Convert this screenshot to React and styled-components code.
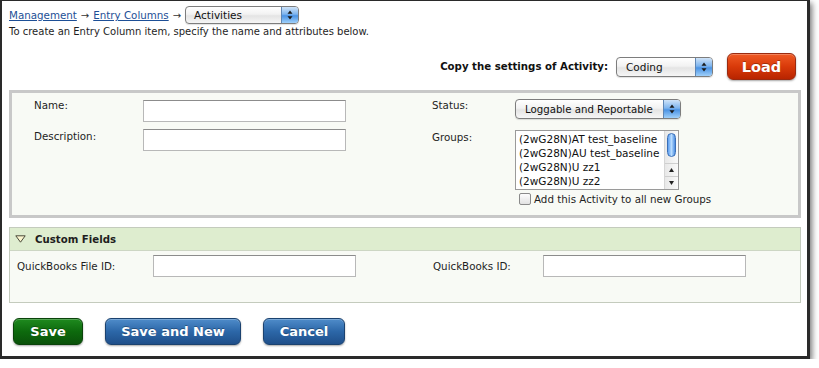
import React from "react";
import styled, { createGlobalStyle } from "styled-components";

const Global = createGlobalStyle`
  html, body { margin: 0; padding: 0; background: #fff; }
  body { font-family: "DejaVu Sans", Verdana, sans-serif; color: #1e1e1e; }
`;

const Window = styled.div`
  box-sizing: border-box;
  width: 810px;
  height: 359px;
  background: #fff;
  border-style: solid;
  border-color: #2a2a2a;
  border-width: 1px 3px 3px 2px;
  box-shadow: 2px 3px 6px rgba(0, 0, 0, 0.55);
  padding: 4px 3px 0 7px;
  display: flex;
  flex-direction: column;
`;

const Crumbs = styled.div`
  display: flex;
  align-items: center;
  gap: 4px;
  height: 20px;
  font-size: 10.3px;
`;

const CrumbLink = styled.a`
  color: #1d4f96;
  text-decoration: underline;
  cursor: pointer;
`;

const Arrow = styled.span`
  color: #333;
  font-size: 10px;
`;

const Intro = styled.div`
  font-size: 10px;
  line-height: 12px;
  margin-top: 1px;
  color: #1e1e1e;
`;

const CopyRow = styled.div`
  display: flex;
  align-items: center;
  justify-content: flex-end;
  margin-top: 15px;
  padding-right: 8px;
  height: 27px;
  gap: 8px;
`;

const CopyLabel = styled.span`
  font-weight: bold;
  font-size: 10.2px;
  color: #111;
`;

const SelectBox = styled.div`
  box-sizing: border-box;
  display: inline-flex;
  align-items: stretch;
  width: ${(p) => p.$w}px;
  height: ${(p) => p.$h}px;
  border: 1px solid #7d7d7d;
  border-radius: 4px;
  background: linear-gradient(#ffffff, #f2f2f2 45%, #e4e4e4 55%, #f6f6f6);
  font-size: ${(p) => p.$fs || 10.5}px;
  color: #111;
  overflow: hidden;
  box-shadow: 0 1px 1px rgba(0, 0, 0, 0.12);
`;

const SelectText = styled.span`
  flex: 1;
  display: flex;
  align-items: center;
  padding-left: ${(p) => p.$pl || 9}px;
  white-space: nowrap;
`;

const SelectCap = styled.span`
  width: 16px;
  display: flex;
  align-items: center;
  justify-content: center;
  border-left: 1px solid #5f86b4;
  background: linear-gradient(#cfe3f8, #7db4ee 45%, #4b93e4 55%, #9fd0fa);
`;

const Arrows = () => (
  <svg width="6" height="10" viewBox="0 0 6 10">
    <path d="M3 0.5 L5.5 3.8 L0.5 3.8 Z" fill="#1a1a1a" />
    <path d="M3 9.5 L5.5 6.2 L0.5 6.2 Z" fill="#1a1a1a" />
  </svg>
);

const Select = ({ w, h, fs, pl, children }) => (
  <SelectBox $w={w} $h={h} $fs={fs}>
    <SelectText $pl={pl}>{children}</SelectText>
    <SelectCap>
      <Arrows />
    </SelectCap>
  </SelectBox>
);

const Button = styled.button`
  box-sizing: border-box;
  width: ${(p) => p.$w}px;
  height: 27px;
  border-radius: 6px;
  font-family: "DejaVu Sans", Verdana, sans-serif;
  font-weight: bold;
  font-size: ${(p) => p.$fs || 13}px;
  color: #fff;
  cursor: pointer;
  padding: 0;
  border: 1px solid ${(p) => p.$edge};
  background: linear-gradient(${(p) => p.$top}, ${(p) => p.$mid} 50%, ${(p) => p.$bot});
  box-shadow: 0 1px 2px rgba(0, 0, 0, 0.35), inset 0 1px 0 rgba(255, 255, 255, 0.25);
  text-shadow: 0 -1px 0 rgba(0, 0, 0, 0.3);
`;

const LoadButton = styled(Button)`
  margin-left: 6px;
`;

const Panel = styled.div`
  margin-top: 10px;
  margin-right: 3px;
  border: 3px solid #c8c8c8;
  background: #f8faf5;
  padding: 6px 0 10px 22px;
  display: grid;
  grid-template-columns: 109px 289px 83px 1fr;
  grid-template-rows: auto auto auto;
  row-gap: 7px;
  align-items: start;
`;

const Label = styled.label`
  font-size: 10.3px;
  line-height: 13px;
  color: #1e1e1e;
  padding-top: ${(p) => p.$pt || 0}px;
`;

const TextInput = styled.input`
  box-sizing: border-box;
  width: 203px;
  height: 22px;
  margin: ${(p) => p.$mt || 0}px 0 0 0;
  border: 1px solid #b8b8b8;
  border-top-color: #8c8c8c;
  background: #fff;
  padding: 2px 4px;
  font-size: 11px;
  outline: none;
`;

const ListBox = styled.div`
  box-sizing: border-box;
  width: 164px;
  height: 60px;
  border: 1px solid #9a9a9a;
  background: #fff;
  display: flex;
  margin-top: 1px;
`;

const ListItems = styled.div`
  flex: 1;
  padding: 1px 0 0 3px;
  font-size: 10.5px;
  line-height: 14px;
  color: #111;
  white-space: nowrap;
  overflow: hidden;
`;

const ScrollBar = styled.div`
  width: 13px;
  display: flex;
  flex-direction: column;
  align-items: center;
  background: linear-gradient(90deg, #e8e8e8, #fafafa);
  border-left: 1px solid #d6d6d6;
`;

const Thumb = styled.div`
  width: 9px;
  height: 24px;
  margin-top: 2px;
  border-radius: 5px;
  border: 1px solid #3a6fb8;
  box-sizing: border-box;
  background: linear-gradient(90deg, #5d9ef0, #b8dcff 50%, #4d8de0);
`;

const ScrollArrow = styled.div`
  height: 13px;
  width: 13px;
  display: flex;
  align-items: center;
  justify-content: center;
  border-top: 1px solid #cfcfcf;
  box-sizing: border-box;
  margin-top: ${(p) => (p.$first ? "auto" : "0")};
`;

const CheckRow = styled.div`
  grid-column: 4;
  display: flex;
  align-items: center;
  gap: 3px;
  margin-top: -4px;
  padding-left: 4px;
  font-size: 10.3px;
  color: #1e1e1e;
`;

const CheckBox = styled.span`
  box-sizing: border-box;
  width: 12px;
  height: 12px;
  border: 1px solid #8a8a8a;
  border-radius: 2px;
  background: linear-gradient(#fdfdfd, #e2e2e2);
`;

const Custom = styled.div`
  margin-top: 9px;
  margin-right: 3px;
  border: 1px solid #c4cbbd;
  display: flex;
  flex-direction: column;
`;

const CustomHead = styled.div`
  height: 22px;
  background: #deedcf;
  border-bottom: 1px solid #cdd6c4;
  display: flex;
  align-items: center;
  padding-left: 5px;
  gap: 9px;
  font-weight: bold;
  font-size: 10.2px;
  color: #1e1e1e;
`;

const CustomBody = styled.div`
  height: 51px;
  background: #f8faf5;
  display: grid;
  grid-template-columns: 136px 280px 110px 1fr;
  align-items: start;
  padding: 4px 0 0 7px;
  box-sizing: border-box;
`;

const CenterLabel = styled(Label)`
  line-height: 22px;
`;

const ButtonRow = styled.div`
  display: flex;
  gap: 22px;
  margin-top: 15px;
  padding-left: 4px;
`;

const Triangle = () => (
  <svg width="11" height="8" viewBox="0 0 11 8">
    <path d="M0.8 0.8 L10.2 0.8 L5.5 7.2 Z" fill="#fbf6cf" stroke="#4a4a3a" strokeWidth="1" />
  </svg>
);

const SmallArrow = ({ up }) => (
  <svg width="5" height="4" viewBox="0 0 5 4">
    <path d={up ? "M2.5 0 L5 4 L0 4 Z" : "M0 0 L5 0 L2.5 4 Z"} fill="#222" />
  </svg>
);

export default function App() {
  return (
    <>
      <Global />
      <Window>
        <Crumbs>
          <CrumbLink>Management</CrumbLink>
          <Arrow>→</Arrow>
          <CrumbLink>Entry Columns</CrumbLink>
          <Arrow>→</Arrow>
          <Select w={114} h={18} fs={10.5} pl={8}>
            Activities
          </Select>
        </Crumbs>
        <Intro>To create an Entry Column item, specify the name and attributes below.</Intro>
        <CopyRow>
          <CopyLabel>Copy the settings of Activity:</CopyLabel>
          <Select w={97} h={20} fs={10.5} pl={9}>
            Coding
          </Select>
          <LoadButton $w={69} $fs={14.5} $top="#ef5a24" $mid="#d93a0a" $bot="#b82400" $edge="#9a2a10">
            Load
          </LoadButton>
        </CopyRow>

        <Panel>
          <Label>Name:</Label>
          <TextInput $mt={1} />
          <Label>Status:</Label>
          <Select w={166} h={20} fs={10.2} pl={9}>
            Loggable and Reportable
          </Select>

          <Label $pt={1}>Description:</Label>
          <TextInput />
          <Label $pt={2}>Groups:</Label>
          <ListBox>
            <ListItems>
              <div>(2wG28N)AT test_baseline</div>
              <div>(2wG28N)AU test_baseline</div>
              <div>(2wG28N)U zz1</div>
              <div>(2wG28N)U zz2</div>
            </ListItems>
            <ScrollBar>
              <Thumb />
              <ScrollArrow $first>
                <SmallArrow up />
              </ScrollArrow>
              <ScrollArrow>
                <SmallArrow />
              </ScrollArrow>
            </ScrollBar>
          </ListBox>

          <CheckRow>
            <CheckBox />
            <span>Add this Activity to all new Groups</span>
          </CheckRow>
        </Panel>

        <Custom>
          <CustomHead>
            <Triangle />
            <span>Custom Fields</span>
          </CustomHead>
          <CustomBody>
            <CenterLabel>QuickBooks File ID:</CenterLabel>
            <TextInput />
            <CenterLabel>QuickBooks ID:</CenterLabel>
            <TextInput />
          </CustomBody>
        </Custom>

        <ButtonRow>
          <Button $w={70} $top="#1f8a1f" $mid="#0d6a0d" $bot="#0a520a" $edge="#0a430a">
            Save
          </Button>
          <Button $w={136} $top="#4f8cca" $mid="#2c67a8" $bot="#1f4f8a" $edge="#1b426f">
            Save and New
          </Button>
          <Button $w={82} $top="#4f8cca" $mid="#2c67a8" $bot="#1f4f8a" $edge="#1b426f">
            Cancel
          </Button>
        </ButtonRow>
      </Window>
    </>
  );
}
